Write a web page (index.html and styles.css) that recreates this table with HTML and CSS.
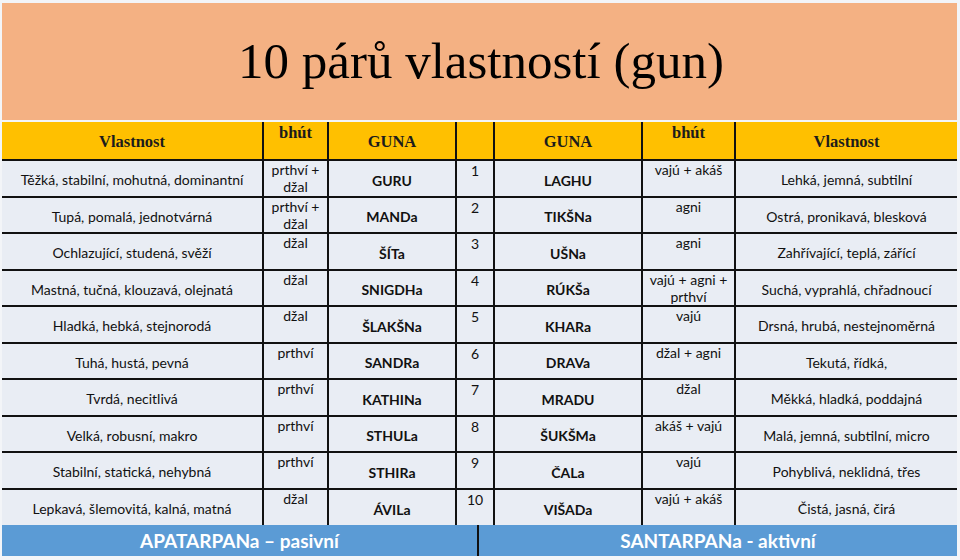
FILE: index.html
```
<!DOCTYPE html>
<html lang="cs">
<head>
<meta charset="utf-8">
<title>10 párů vlastností (gun)</title>
<link rel="stylesheet" href="styles.css">
</head>
<body>
<div class="slide">
  <header class="title-bar">
    <h1 class="title">10 párů vlastností (gun)</h1>
  </header>
  <table class="gunas">
    <colgroup>
      <col class="c-prop"><col class="c-bhut"><col class="c-guna"><col class="c-num"><col class="c-guna2"><col class="c-bhut2"><col class="c-prop2">
    </colgroup>
    <thead>
      <tr>
        <th class="mid">Vlastnost</th>
        <th class="top">bhút</th>
        <th class="mid">GUNA</th>
        <th></th>
        <th class="mid">GUNA</th>
        <th class="top">bhút</th>
        <th class="mid">Vlastnost</th>
      </tr>
    </thead>
    <tbody>
      <tr><td class="prop">Těžká, stabilní, mohutná, dominantní</td><td class="bhut">prthví +<br>džal</td><td class="guna">GURU</td><td class="num">1</td><td class="guna">LAGHU</td><td class="bhut">vajú + akáš</td><td class="prop">Lehká, jemná, subtilní</td></tr>
      <tr><td class="prop">Tupá, pomalá, jednotvárná</td><td class="bhut">prthví +<br>džal</td><td class="guna">MANDa</td><td class="num">2</td><td class="guna">TIKŠNa</td><td class="bhut">agni</td><td class="prop">Ostrá, pronikavá, blesková</td></tr>
      <tr><td class="prop">Ochlazující, studená, svěží</td><td class="bhut">džal</td><td class="guna">ŠÍTa</td><td class="num">3</td><td class="guna">UŠNa</td><td class="bhut">agni</td><td class="prop">Zahřívající, teplá, zářící</td></tr>
      <tr><td class="prop">Mastná, tučná, klouzavá, olejnatá</td><td class="bhut">džal</td><td class="guna">SNIGDHa</td><td class="num">4</td><td class="guna">RÚKŠa</td><td class="bhut">vajú + agni +<br>prthví</td><td class="prop">Suchá, vyprahlá, chřadnoucí</td></tr>
      <tr><td class="prop">Hladká, hebká, stejnorodá</td><td class="bhut">džal</td><td class="guna">ŠLAKŠNa</td><td class="num">5</td><td class="guna">KHARa</td><td class="bhut">vajú</td><td class="prop">Drsná, hrubá, nestejnoměrná</td></tr>
      <tr><td class="prop">Tuhá, hustá, pevná</td><td class="bhut">prthví</td><td class="guna">SANDRa</td><td class="num">6</td><td class="guna">DRAVa</td><td class="bhut">džal + agni</td><td class="prop">Tekutá, řídká,</td></tr>
      <tr><td class="prop">Tvrdá, necitlivá</td><td class="bhut">prthví</td><td class="guna">KATHINa</td><td class="num">7</td><td class="guna">MRADU</td><td class="bhut">džal</td><td class="prop">Měkká, hladká, poddajná</td></tr>
      <tr><td class="prop">Velká, robusní, makro</td><td class="bhut">prthví</td><td class="guna">STHULa</td><td class="num">8</td><td class="guna">ŠUKŠMa</td><td class="bhut">akáš + vajú</td><td class="prop">Malá, jemná, subtilní, micro</td></tr>
      <tr><td class="prop">Stabilní, statická, nehybná</td><td class="bhut">prthví</td><td class="guna">STHIRa</td><td class="num">9</td><td class="guna">ČALa</td><td class="bhut">vajú</td><td class="prop">Pohyblivá, neklidná, třes</td></tr>
      <tr><td class="prop">Lepkavá, šlemovitá, kalná, matná</td><td class="bhut">džal</td><td class="guna">ÁVILa</td><td class="num">10</td><td class="guna">VIŠADa</td><td class="bhut">vajú + akáš</td><td class="prop">Čistá, jasná, čirá</td></tr>
    </tbody>
  </table>
  <div class="footer">
    <div class="foot-cell">APATARPANa – pasivní</div>
    <div class="foot-cell">SANTARPANa - aktivní</div>
  </div>
</div>
</body>
</html>
```
FILE: styles.css
```
html, body {
  margin: 0;
  padding: 0;
}
body {
  background: #f3f5f8;
  width: 960px;
  height: 560px;
  overflow: hidden;
}
.slide {
  margin: 3px 3px 0 2px;
  width: 955px;
}
.title-bar {
  background: #f4b183;
  height: 117px;
  box-sizing: border-box;
  padding-top: 33px;
  margin-bottom: 2px;
}
.title {
  margin: 0;
  font-family: "Liberation Serif", "Times New Roman", serif;
  font-weight: normal;
  font-size: 51px;
  line-height: 51px;
  text-align: center;
  color: #000;
  padding-left: 3px;
}
.gunas {
  width: 955px;
  table-layout: fixed;
  border-collapse: collapse;
  border-spacing: 0;
  font-family: "Lato", "Liberation Sans", sans-serif;
  font-size: 14px;
  color: #111;
}
.c-prop { width: 261px; }
.c-bhut { width: 65px; }
.c-guna { width: 128px; }
.c-num { width: 38px; }
.c-guna2 { width: 148px; }
.c-bhut2 { width: 93px; }
.c-prop2 { width: 222px; }

.gunas th, .gunas td {
  padding: 0;
  border-left: 2px solid #111;
  border-right: 2px solid #111;
  text-align: center;
}
.gunas th:first-child, .gunas td:first-child { border-left: none; }
.gunas th:last-child, .gunas td:last-child { border-right: none; }

.gunas thead tr { height: 38px; }
.gunas th {
  background: #ffc000;
  font-family: "Liberation Serif", "Times New Roman", serif;
  font-weight: bold;
  font-size: 16.5px;
  line-height: 18px;
  color: #1c1c1c;
  border-bottom: 2px solid #111;
}
.gunas th.mid { vertical-align: middle; padding-top: 2px; }
.gunas th.top { vertical-align: top; padding-top: 2px; }

.gunas tbody tr { height: 36.5px; }
.gunas td {
  background: #e9edf4;
  border-bottom: 2px solid #111;
  line-height: 17px;
}
.gunas tbody tr:last-child td { border-bottom: none; }

.gunas td.prop { vertical-align: middle; padding-top: 3px; }
.gunas td.bhut { vertical-align: top; }
.gunas td.num { vertical-align: top; padding-top: 1px; }
.gunas td.guna { vertical-align: middle; font-weight: bold; padding-top: 4px; }

.footer {
  display: flex;
  height: 31px;
  background: #5b9bd5;
}
.foot-cell {
  flex: 1;
  display: flex;
  align-items: center;
  justify-content: center;
  color: #fff;
  font-family: "Lato", "Liberation Sans", sans-serif;
  font-weight: bold;
  font-size: 19px;
}
.foot-cell:first-child {
  flex: 0 0 475px;
  border-right: 2px solid #111;
}
```
